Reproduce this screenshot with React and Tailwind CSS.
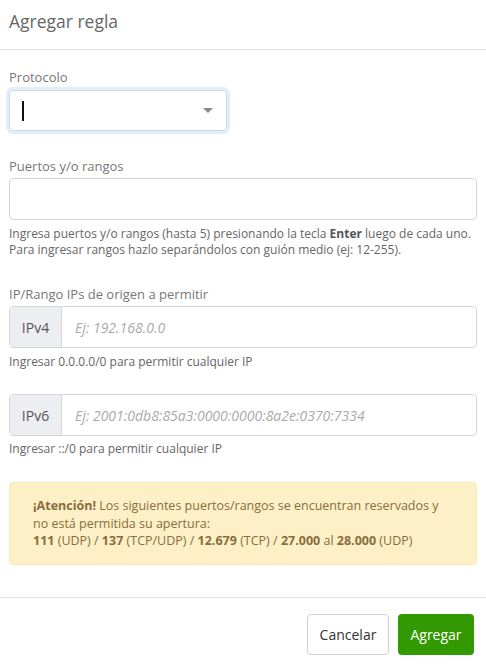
export default function App() {
  return (
    <div className="w-[486px] h-[665px] bg-white font-['Open_Sans',sans-serif] text-[#555]">
      {/* Header */}
      <div className="h-[50px] border-b border-[#e3e3ea] px-[9px] flex items-center">
        <h1 className="text-[17.5px] text-[#666] leading-none -mt-[5px]">Agregar regla</h1>
      </div>

      {/* Body */}
      <div className="px-[9px] pt-[18px]">
        {/* Protocolo */}
        <label className="block text-[13px] text-[#777] leading-[18px]">Protocolo</label>
        <div className="mt-[4px] w-[218px] h-[41px] rounded-[4px] border border-[#cfd8e0] shadow-[0_0_0_3px_#e1eefb] flex items-center px-[12px]">
          <span className="w-[2px] h-[20px] bg-[#111]" />
          <span className="ml-auto w-0 h-0 border-l-[5px] border-r-[5px] border-t-[5px] border-l-transparent border-r-transparent border-t-[#888] mr-[1px]" />
        </div>

        {/* Puertos */}
        <label className="block mt-[26px] text-[13px] text-[#777] leading-[18px]">Puertos y/o rangos</label>
        <div className="mt-[3px] h-[42px] rounded-[4px] border border-[#d6d6d6]" />
        <p className="mt-[6px] text-[12px] leading-[16px] text-[#666]">
          Ingresa puertos y/o rangos (hasta 5) presionando la tecla <b className="font-bold text-[#555]">Enter</b> luego de cada uno.
          <br />
          Para ingresar rangos hazlo separándolos con guión medio (ej: 12-255).
        </p>

        {/* IP */}
        <label className="block mt-[27px] text-[13px] text-[#777] leading-[18px]">IP/Rango IPs de origen a permitir</label>
        <div className="mt-[3px] h-[42px] rounded-[4px] border border-[#d6d6d6] flex overflow-hidden">
          <div className="w-[52px] bg-[#eceef1] border-r border-[#d6d6d6] flex items-center justify-center text-[14px] text-[#555]">IPv4</div>
          <div className="flex items-center pl-[13px] text-[14px] italic text-[#aaa]">Ej: 192.168.0.0</div>
        </div>
        <p className="mt-[6px] text-[12px] leading-[16px] text-[#666]">Ingresar 0.0.0.0/0 para permitir cualquier IP</p>

        <div className="mt-[24px] h-[42px] rounded-[4px] border border-[#d6d6d6] flex overflow-hidden">
          <div className="w-[52px] bg-[#eceef1] border-r border-[#d6d6d6] flex items-center justify-center text-[14px] text-[#555]">IPv6</div>
          <div className="flex items-center pl-[13px] text-[14px] italic text-[#aaa]">Ej: 2001:0db8:85a3:0000:0000:8a2e:0370:7334</div>
        </div>
        <p className="mt-[5px] text-[12px] leading-[16px] text-[#666]">Ingresar ::/0 para permitir cualquier IP</p>

        {/* Alert */}
        <div className="mt-[25px] rounded-[4px] bg-[#fdf0c7] border border-[#fbeab6] px-[23px] pt-[14px] pb-[14px] text-[12.5px] leading-[17.5px] text-[#8a6d3b]">
          <b className="font-bold">¡Atención!</b> Los siguientes puertos/rangos se encuentran reservados y
          <br />
          no está permitida su apertura:
          <br />
          <b className="font-bold">111</b> (UDP) / <b className="font-bold">137</b> (TCP/UDP) / <b className="font-bold">12.679</b> (TCP) / <b className="font-bold">27.000</b> al <b className="font-bold">28.000</b> (UDP)
        </div>
      </div>

      {/* Footer */}
      <div className="mt-[32px] border-t border-[#e3e3ea] px-[12px] pt-[16px] flex justify-end gap-[9px]">
        <button className="h-[41px] w-[82px] rounded-[4px] border border-[#d0d0d0] bg-white text-[14px] text-[#333]">Cancelar</button>
        <button className="h-[41px] w-[76px] rounded-[4px] bg-[#339900] text-[14px] text-white">Agregar</button>
      </div>
    </div>
  )
}
